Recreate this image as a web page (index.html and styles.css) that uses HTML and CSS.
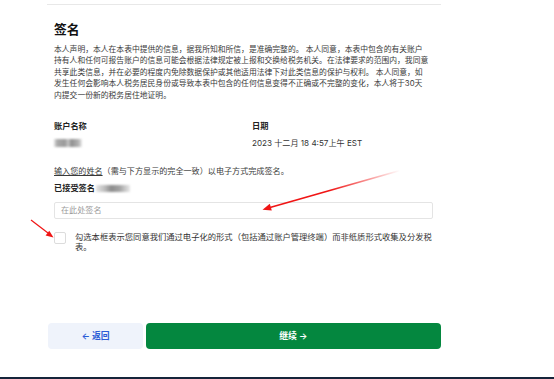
FILE: index.html
```html
<!DOCTYPE html>
<html lang="zh-CN">

<head>
    <meta charset="UTF-8">
    <meta name="viewport" content="width=device-width, initial-scale=1.0">
    <title>签名</title>

    <link rel="stylesheet" href="styles.css">
</head>

<body>

    <div class="page">

        <div class="top-line"></div>

        <div class="content">

            <h1>签名</h1>

            <p class="declare">本人声明，本人在本表中提供的信息，据我所知和所信，是准确完整的。 本人同意，本表中包含的有关账户持有人和任何可报告账户的信息可能会根据法律规定被上报和交换给税务机关。在法律要求的范围内，我同意共享此类信息，并在必要的程度内免除数据保护或其他适用法律下对此类信息的保护与权利。 本人同意，如发生任何会影响本人税务居民身份或导致本表中包含的任何信息变得不正确或不完整的变化，本人将于30天内提交一份新的税务居住地证明。</p>

            <div class="meta">
                <div>
                    <div class="label">账户名称</div>
                    <div class="value"><span class="blur blur-name"></span></div>
                </div>
                <div>
                    <div class="label">日期</div>
                    <div class="value">2023 十二月 18 4:57上午 EST</div>
                </div>
            </div>

            <div class="hint"><a href="javascript:;">输入您的姓名</a>（需与下方显示的完全一致）以电子方式完成签名。</div>

            <div class="accepted">已接受签名<span class="blur blur-sign"></span></div>

            <input class="sign-input" type="text" placeholder="在此处签名">

            <label class="agree">
                <span class="box"></span>
                <span class="agree-text">勾选本框表示您同意我们通过电子化的形式（包括通过账户管理终端）而非纸质形式收集及分发税表。</span>
            </label>

        </div>

        <div class="actions">
            <button class="btn-back">← 返回</button>
            <button class="btn-next">继续 →</button>
        </div>

    </div>

    <div class="footer"></div>

    <!-- 标注箭头 -->
    <svg class="marks" width="554" height="379" viewBox="0 0 554 379">
        <defs>
            <linearGradient id="fade" gradientUnits="userSpaceOnUse" x1="400" y1="170.5" x2="330" y2="190.5">
                <stop offset="0" stop-color="#f01515" stop-opacity="0"/>
                <stop offset="1" stop-color="#f01515" stop-opacity="1"/>
            </linearGradient>
        </defs>
        <line x1="400" y1="170.5" x2="270" y2="207.5" stroke="url(#fade)" stroke-width="1.8"/>
        <polygon points="262.5,209.8 271.8,210.6 269.8,203.8" fill="#f01515"/>
        <line x1="31" y1="220" x2="48" y2="233" stroke="#f01515" stroke-width="1.2"/>
        <polygon points="53.5,237.5 45.6,235.6 49.3,230.7" fill="#f01515"/>
    </svg>

</body>

</html>
```

FILE: styles.css
```css
* {
    margin: 0;
    padding: 0;
    box-sizing: border-box;
}

body {
    background-color: white;
    font-family: Inter, "Noto Sans CJK SC", sans-serif;
    color: #333;
    overflow: hidden;
}

.page {
    width: 394px;
    margin-left: 47px;
}

.top-line {
    margin-top: 4px;
    border-top: 1px solid #e8e8e8;
}

.content {
    padding: 0 8px 0 7px;
}

h1 {
    margin-top: 17px;
    font-size: 12.8px;
    line-height: 16px;
    font-weight: 700;
    color: #111;
}

.declare {
    width: 375px;
    margin-top: 5.5px;
    font-size: 7.8px;
    line-height: 11.6px;
    color: #3a3a3a;
}

.meta {
    display: grid;
    grid-template-columns: 198px 1fr;
    margin-top: 18.5px;
}

.label {
    font-size: 8.2px;
    line-height: 12px;
    font-weight: 700;
    color: #222;
}

.value {
    margin-top: 4.7px;
    font-size: 8.1px;
    line-height: 12px;
    height: 12px;
    color: #333;
}

.blur {
    display: inline-block;
    vertical-align: middle;
    filter: blur(1.2px);
    background: linear-gradient(90deg, #e2e2e2 0, #a9a9a9 12%, #9a9a9a 40%, #c9c9c9 50%, #8f8f8f 62%, #b4b4b4 88%, #ededed 100%);
}

.blur-name {
    width: 28px;
    height: 8px;
}

.blur-sign {
    width: 34px;
    height: 7px;
    margin-left: 1px;
    background: linear-gradient(90deg, #e6e6e6 0, #bdbdbd 25%, #8c8c8c 45%, #a4a4a4 70%, #e9e9e9 100%);
}

.hint {
    margin-top: 16.3px;
    font-size: 8.1px;
    line-height: 12px;
    color: #3a3a3a;
}

.hint a {
    color: #3a3a3a;
    text-decoration: underline;
}

.accepted {
    margin-top: 4.7px;
    font-size: 8.2px;
    line-height: 12px;
    font-weight: 700;
    color: #222;
}

.sign-input {
    display: block;
    width: 379px;
    height: 17.6px;
    margin-top: 8px;
    padding-left: 6px;
    border: 1px solid #e4e4e4;
    border-radius: 2px;
    outline: none;
    font-family: inherit;
    font-size: 8.1px;
}

.sign-input::placeholder {
    color: #9a9a9a;
}

.agree {
    display: flex;
    gap: 9px;
    margin-top: 12.4px;
}

.box {
    flex: none;
    width: 12px;
    height: 12px;
    border: 1px solid #dcdcdc;
    border-radius: 2px;
    background-color: white;
}

.agree-text {
    width: 358px;
    font-size: 8.3px;
    line-height: 10.4px;
    color: #333;
}

.actions {
    display: flex;
    gap: 2.7px;
    width: 393px;
    height: 26.6px;
    margin-top: 70.2px;
    margin-left: 0.7px;
}

.actions button {
    border: 0;
    outline: none;
    border-radius: 4px;
    font-family: inherit;
    font-size: 8.8px;
    font-weight: 700;
}

.btn-back {
    width: 95.6px;
    background-color: #eff3fb;
    color: #2b5cd6;
}

.btn-next {
    flex: 1;
    background-color: #04873f;
    color: white;
}

.footer {
    margin-top: 28px;
    height: 6px;
    background-color: #15243a;
}

.marks {
    position: absolute;
    top: 0;
    left: 0;
    pointer-events: none;
}
```
